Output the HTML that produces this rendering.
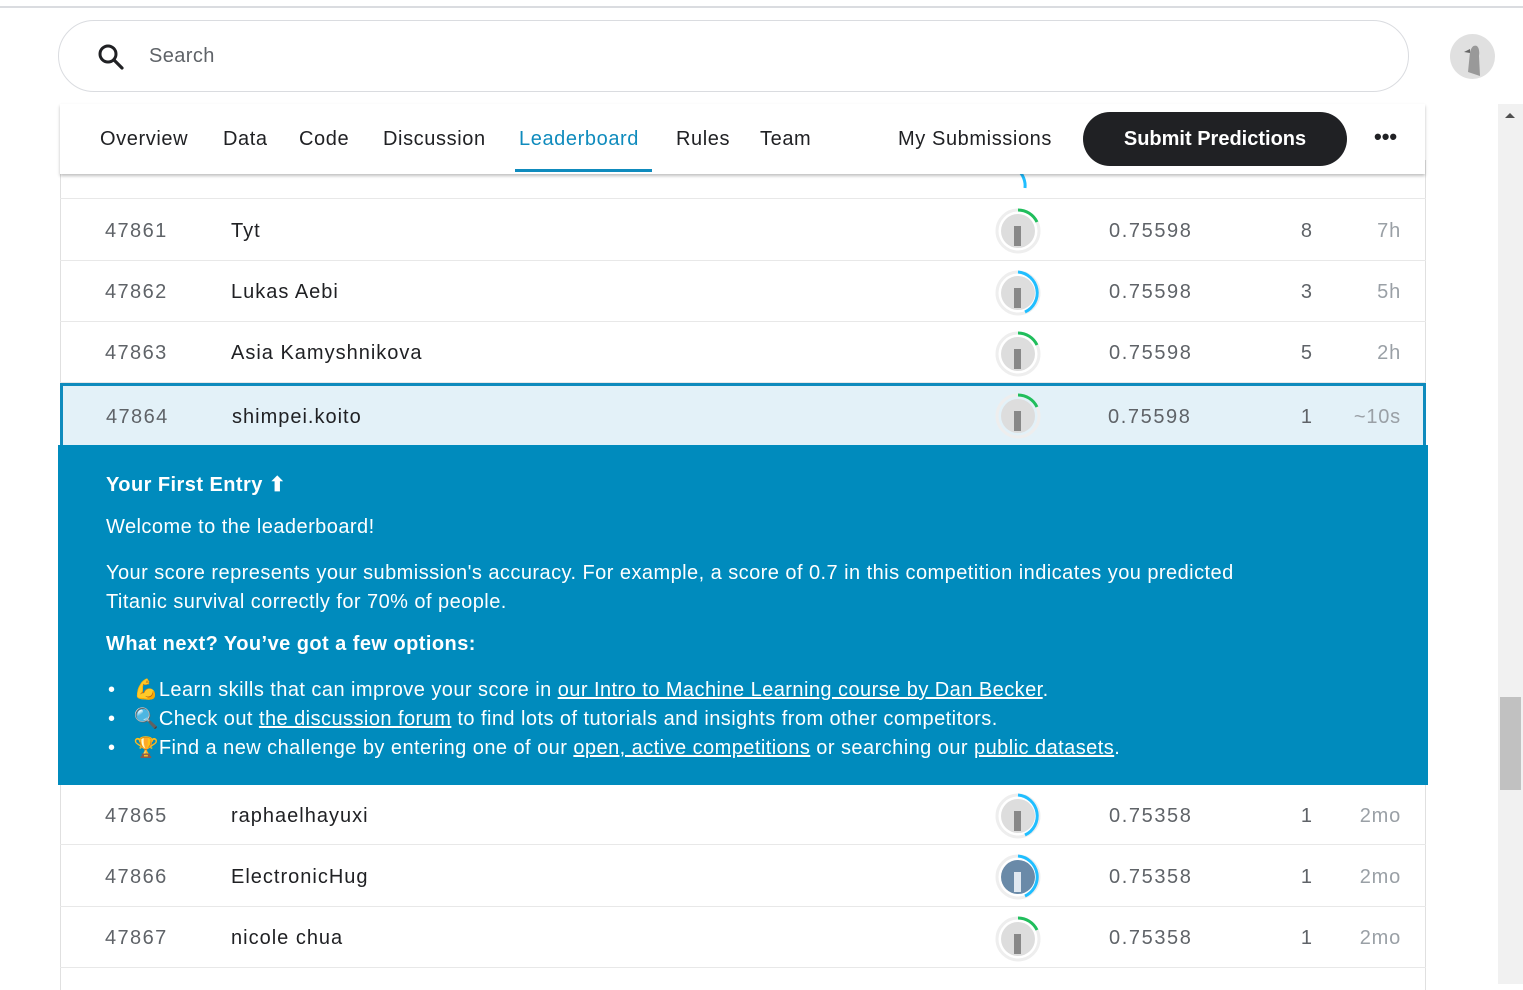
<!DOCTYPE html>
<html><head><style>
*{margin:0;padding:0;box-sizing:border-box}
body{width:1523px;height:984px;overflow:hidden;background:#fff;font-family:"Liberation Sans",sans-serif;position:relative;color:#202124}
.topline{position:absolute;left:0;top:6px;width:1523px;height:2px;background:#dadce0}
.search{position:absolute;left:58px;top:20px;width:1351px;height:72px;border:1px solid #dadce0;border-radius:36px}
.search span{position:absolute;left:90px;top:24px;font-size:20px;color:#5f6368;letter-spacing:.4px}
.av{position:absolute;border-radius:50%;background:#e0e0e0;overflow:hidden}
.nav{position:absolute;left:60px;top:104px;width:1365px;height:70px;background:#fff;box-shadow:0 2px 3px rgba(0,0,0,.25);z-index:5}
.nav a{position:absolute;top:24px;font-size:20px;color:#202124;text-decoration:none;letter-spacing:.6px}
.btn{position:absolute;left:1023px;top:8px;width:264px;height:54px;border-radius:27px;background:#202124;color:#fff;font-weight:bold;font-size:20px;text-align:center;line-height:54px}
.table{position:absolute;left:60px;top:160px;width:1366px;height:830px;border-left:1px solid #e0e0e0;border-right:1px solid #e0e0e0}
.row{position:absolute;left:60px;width:1366px;border-bottom:1px solid #e8e8e8;font-size:20px}
.row div{position:absolute}
.r{left:45px;color:#5f6368;letter-spacing:1.4px}
.n{left:171px;color:#202124;letter-spacing:1px}
.s{left:1049px;color:#5f6368;letter-spacing:1.6px}
.e{right:114px;color:#5f6368}
.t{right:25px;color:#9aa0a6;letter-spacing:.8px}
.panel{position:absolute;left:58px;top:445px;width:1370px;height:340px;background:#008bbd;color:#fff;font-size:20px;padding-left:48px;letter-spacing:.45px}
.panel p{position:absolute;left:48px}
.panel u{text-decoration:underline}
.sb{position:absolute;left:1498px;top:104px;width:25px;height:880px;background:#f1f1f1}
</style></head><body>
<div class="topline"></div>
<div class="search">
<svg style="position:absolute;left:38px;top:22px" width="28" height="28" viewBox="0 0 28 28"><circle cx="11" cy="11" r="8" fill="none" stroke="#202124" stroke-width="3"/><line x1="17" y1="17" x2="25" y2="25" stroke="#202124" stroke-width="3.2" stroke-linecap="round"/></svg>
<span>Search</span></div>
<div class="av" style="left:1450px;top:34px;width:45px;height:45px"><svg width="45" height="45"><path d="M18 38 L20 18 Q22 10 27 12 Q30 15 29 22 L30 42 Z" fill="#999"/><path d="M14 18 L20 15 L20 19Z" fill="#666"/></svg></div>
<div class="nav">
<a style="left:40px">Overview</a><a style="left:163px">Data</a><a style="left:239px">Code</a><a style="left:323px">Discussion</a><a style="left:459px;color:#0f8bbd">Leaderboard</a><a style="left:616px">Rules</a><a style="left:700px">Team</a><a style="left:838px">My Submissions</a>
<div style="position:absolute;left:455px;top:65px;width:137px;height:3px;background:#0f8bbd"></div>
<div class="btn">Submit Predictions</div>
<div style="position:absolute;left:1314px;top:20px;font-size:22px;font-weight:bold">•••</div>
</div>
<div class="table"></div>
<div class="row" style="top:160px;height:39px"></div>
<div class="row" style="top:199px;height:62px;line-height:64px"><div class="r">47861</div><div class="n">Tyt</div><div class="s">0.75598</div><div class="e">8</div><div class="t">7h</div></div>
<div class="row" style="top:261px;height:61px;line-height:63px"><div class="r">47862</div><div class="n">Lukas Aebi</div><div class="s">0.75598</div><div class="e">3</div><div class="t">5h</div></div>
<div class="row" style="top:322px;height:61px;line-height:63px"><div class="r">47863</div><div class="n">Asia Kamyshnikova</div><div class="s">0.75598</div><div class="e">5</div><div class="t">2h</div></div>
<div class="row" style="top:383px;height:62px;line-height:62px;background:#e3f1f8;border:3px solid #0f8bbd;border-bottom:none"><div class="r" style="left:43px">47864</div><div class="n" style="left:169px">shimpei.koito</div><div class="s" style="left:1045px">0.75598</div><div class="e" style="right:111px">1</div><div class="t" style="right:22px">~10s</div></div>
<div class="panel">
<p style="top:27px;font-weight:bold">Your First Entry ⬆</p>
<p style="top:71px">Welcome to the leaderboard!</p>
<p style="top:114px;line-height:29px;width:1190px">Your score represents your submission's accuracy. For example, a score of 0.7 in this competition indicates you predicted Titanic survival correctly for 70% of people.</p>
<p style="top:188px;font-weight:bold">What next? You’ve got a few options:</p>
<p style="top:231px;left:50px;line-height:29px">•&nbsp;&nbsp;&nbsp;💪Learn skills that can improve your score in <u>our Intro to Machine Learning course by Dan Becker</u>.<br>•&nbsp;&nbsp;&nbsp;🔍Check out <u>the discussion forum</u> to find lots of tutorials and insights from other competitors.<br>•&nbsp;&nbsp;&nbsp;🏆Find a new challenge by entering one of our <u>open, active competitions</u> or searching our <u>public datasets</u>.</p>
</div>
<div class="row" style="top:785px;height:60px;line-height:62px"><div class="r">47865</div><div class="n">raphaelhayuxi</div><div class="s">0.75358</div><div class="e">1</div><div class="t">2mo</div></div>
<div class="row" style="top:845px;height:62px;line-height:64px"><div class="r">47866</div><div class="n">ElectronicHug</div><div class="s">0.75358</div><div class="e">1</div><div class="t">2mo</div></div>
<div class="row" style="top:907px;height:61px;line-height:63px"><div class="r">47867</div><div class="n">nicole chua</div><div class="s">0.75358</div><div class="e">1</div><div class="t">2mo</div></div>
<svg style="position:absolute;left:990px;top:150px" width="60" height="834">
<g fill="none" stroke-width="3">
<circle cx="28" cy="81" r="21" stroke="#eee"/><path d="M28 60 A21 21 0 0 1 47 72" stroke="#20be5c"/>
<circle cx="28" cy="143" r="21" stroke="#eee"/><path d="M28 122 A21 21 0 0 1 35 162" stroke="#20beff"/>
<circle cx="28" cy="204" r="21" stroke="#eee"/><path d="M28 183 A21 21 0 0 1 47 195" stroke="#20be5c"/>
<circle cx="28" cy="266" r="21" stroke="#eee"/><path d="M28 245 A21 21 0 0 1 47 257" stroke="#20be5c"/>
<circle cx="28" cy="666" r="21" stroke="#eee"/><path d="M28 645 A21 21 0 0 1 35 685" stroke="#20beff"/>
<circle cx="28" cy="727" r="21" stroke="#eee"/><path d="M28 706 A21 21 0 0 1 35 746" stroke="#20beff"/>
<circle cx="28" cy="789" r="21" stroke="#eee"/><path d="M28 768 A21 21 0 0 1 47 780" stroke="#20be5c"/>
<path d="M28 20 A21 21 0 0 1 35 38" stroke="#20beff"/>
</g>
<g fill="#ddd"><circle cx="28" cy="81" r="17"/><circle cx="28" cy="143" r="17"/><circle cx="28" cy="204" r="17"/><circle cx="28" cy="266" r="17"/><circle cx="28" cy="666" r="17"/><circle cx="28" cy="727" r="17" fill="#6a8aa8"/><circle cx="28" cy="789" r="17"/></g>
<g fill="#888"><rect x="24" y="76" width="7" height="20"/><rect x="24" y="138" width="7" height="20"/><rect x="24" y="199" width="7" height="20"/><rect x="24" y="261" width="7" height="20"/><rect x="24" y="661" width="7" height="20"/><rect x="24" y="722" width="7" height="20" fill="#e0e8f0"/><rect x="24" y="784" width="7" height="20"/></g>
</svg>
<div class="sb"><div style="position:absolute;left:2px;top:593px;width:21px;height:93px;background:#c1c1c1"></div>
<div style="position:absolute;left:7px;top:9px;border:5px solid transparent;border-bottom-color:#505050;border-top:none"></div></div>
</body></html>
